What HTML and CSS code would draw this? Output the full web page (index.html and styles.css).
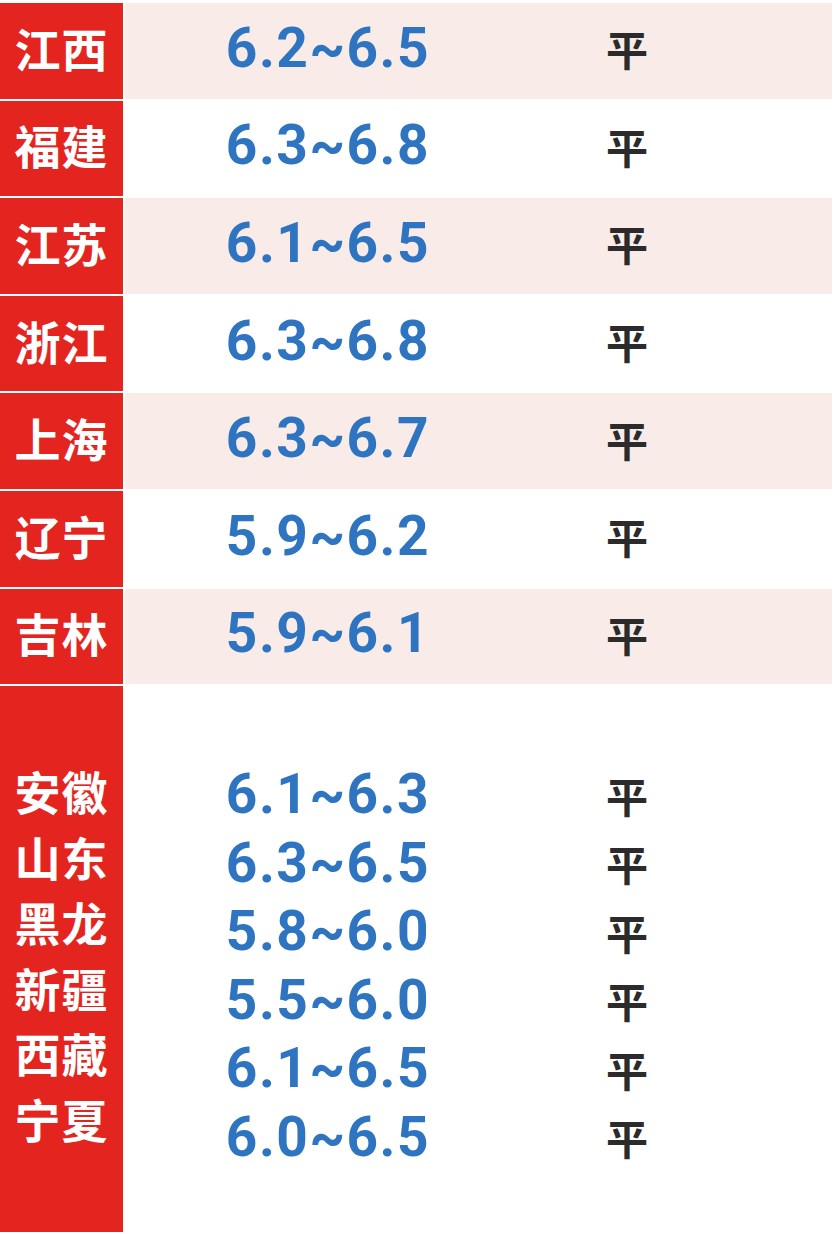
FILE: index.html
```html
<!DOCTYPE html>
<html lang="zh">
<head>
<meta charset="utf-8">
<link rel="stylesheet" href="styles.css">
</head>
<body>
<div class="table">
  <div class="row pink"><div class="name">江西</div><div class="data"><span class="num">6.2~6.5</span><span class="trend">平</span></div></div>
  <div class="row"><div class="name">福建</div><div class="data"><span class="num">6.3~6.8</span><span class="trend">平</span></div></div>
  <div class="row pink"><div class="name">江苏</div><div class="data"><span class="num">6.1~6.5</span><span class="trend">平</span></div></div>
  <div class="row"><div class="name">浙江</div><div class="data"><span class="num">6.3~6.8</span><span class="trend">平</span></div></div>
  <div class="row pink"><div class="name">上海</div><div class="data"><span class="num">6.3~6.7</span><span class="trend">平</span></div></div>
  <div class="row"><div class="name">辽宁</div><div class="data"><span class="num">5.9~6.2</span><span class="trend">平</span></div></div>
  <div class="row pink"><div class="name">吉林</div><div class="data"><span class="num">5.9~6.1</span><span class="trend">平</span></div></div>
  <div class="group">
    <div class="names">
      <div>安徽</div><div>山东</div><div>黑龙</div><div>新疆</div><div>西藏</div><div>宁夏</div>
    </div>
    <div class="list">
      <div class="line"><span class="num">6.1~6.3</span><span class="trend">平</span></div>
      <div class="line"><span class="num">6.3~6.5</span><span class="trend">平</span></div>
      <div class="line"><span class="num">5.8~6.0</span><span class="trend">平</span></div>
      <div class="line"><span class="num">5.5~6.0</span><span class="trend">平</span></div>
      <div class="line"><span class="num">6.1~6.5</span><span class="trend">平</span></div>
      <div class="line"><span class="num">6.0~6.5</span><span class="trend">平</span></div>
    </div>
  </div>
</div>
</body>
</html>
```
FILE: styles.css
```css
html, body {
  margin: 0;
  padding: 0;
  background: #ffffff;
}
.table {
  width: 832px;
  padding-top: 3px;
  display: flex;
  flex-direction: column;
  gap: 2px;
}
.row {
  display: grid;
  grid-template-columns: 123px 1fr;
  column-gap: 2px;
  height: 95.6px;
}
.name {
  background: #e4251f;
  color: #ffffff;
  font-family: "Noto Sans CJK SC", sans-serif;
  font-weight: 700;
  font-size: 46px;
  display: flex;
  align-items: center;
  justify-content: center;
  letter-spacing: 1px;
  padding-bottom: 8px;
}
.data {
  display: flex;
  align-items: center;
  background: #ffffff;
  padding-bottom: 6px;
}
.row.pink .data {
  background: #f9ece8;
}
.num {
  width: 406px;
  text-align: center;
  font-family: Roboto, "Liberation Sans", sans-serif;
  font-weight: 700;
  font-size: 55px;
  color: #2e74c0;
  letter-spacing: 1.5px;
}
.trend {
  width: 192px;
  text-align: center;
  font-family: "Noto Sans CJK SC", sans-serif;
  font-weight: 700;
  font-size: 42px;
  color: #2b2b2b;
}
.group {
  display: grid;
  grid-template-columns: 123px 1fr;
  column-gap: 2px;
  height: 546px;
}
.names {
  background: #e4251f;
  color: #ffffff;
  font-family: "Noto Sans CJK SC", sans-serif;
  font-weight: 700;
  font-size: 46px;
  line-height: 65.5px;
  text-align: center;
  letter-spacing: 1px;
  padding-top: 72px;
}
.list {
  padding-top: 74px;
}
.line {
  display: flex;
  align-items: center;
  height: 68.5px;
}
```
